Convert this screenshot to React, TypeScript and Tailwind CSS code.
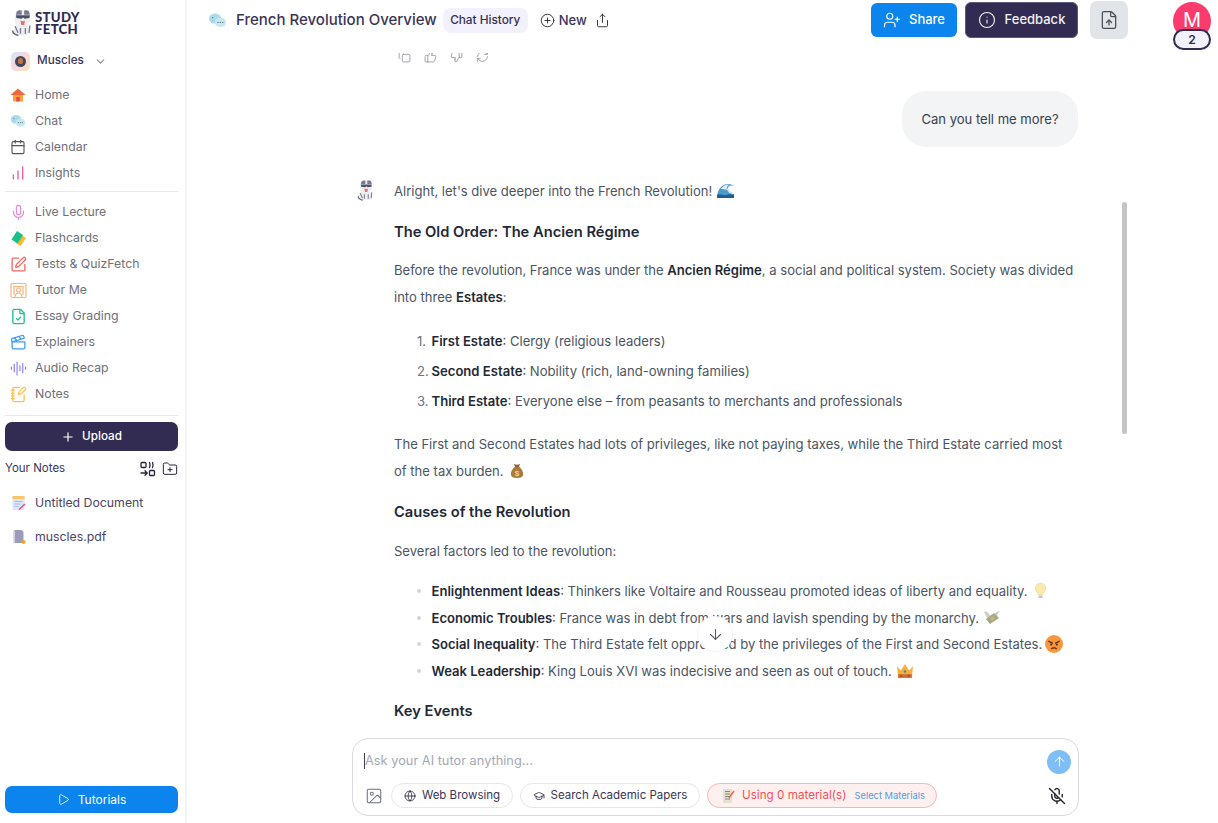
import {
  ArrowDown,
  ArrowUp,
  AudioLines,
  Calendar,
  ChartNoAxesColumnIncreasing,
  ChevronDown,
  CirclePlus,
  Clapperboard,
  Copy,
  FileCheck,
  FileUp,
  FolderPlus,
  Globe,
  GraduationCap,
  Image as ImageIcon,
  Info,
  Mic,
  MicOff,
  NotebookPen,
  Play,
  Plus,
  RefreshCw,
  Share,
  SquarePen,
  ThumbsDown,
  ThumbsUp,
  UserPlus,
} from "lucide-react";

// Small drawn icons
function ChatBubbles({ size = 16 }: { size?: number }) {
  return (
    <svg width={size} height={size} viewBox="0 0 20 20">
      <ellipse cx="7.5" cy="8" rx="6.5" ry="5.5" fill="#a9dbe8" />
      <ellipse cx="13" cy="12" rx="6" ry="5" fill="#c6e8ef" />
      <circle cx="10.5" cy="12" r="0.7" fill="#56707c" />
      <circle cx="13" cy="12" r="0.7" fill="#56707c" />
      <circle cx="15.5" cy="12" r="0.7" fill="#56707c" />
      <circle cx="5" cy="7" r="0.7" fill="#56707c" />
    </svg>
  );
}

function HomeIcon() {
  return (
    <svg width="16" height="16" viewBox="0 0 16 16">
      <path d="M3 7h10v7.5H3z" fill="#f9a23b" />
      <path d="M8 1.5 15.5 8h-15z" fill="#f0683a" />
      <path d="M6.3 10h3.4v4.500H6.3z" fill="#ea3f5b" />
    </svg>
  );
}

function FlashIcon() {
  return (
    <svg width="17" height="17" viewBox="0 0 17 17">
      <path d="M9 3.5 16 8l-5.5 8-4-2.5z" fill="#f7b733" />
      <path d="M7 1 13 5l-5.5 8.5L1.5 9.5z" fill="#16c08a" />
    </svg>
  );
}

function TutorIcon() {
  return (
    <svg width="17" height="17" viewBox="0 0 17 17" fill="none" stroke="#f9b27c" strokeWidth="1.2">
      <rect x="1" y="1.5" width="15" height="14" rx="1.5" />
      <path d="M4 13V4.5h9V13" />
      <circle cx="8.5" cy="8" r="2" />
      <path d="M5 15c.4-2.800 1.800-4 3.500-4s3.100 1.200 3.500 4" />
    </svg>
  );
}

function LayoutSwapIcon() {
  return (
    <svg width="16" height="16" viewBox="0 0 16 16" fill="none" stroke="#27233d" strokeWidth="1.3">
      <rect x="1" y="1.5" width="5" height="5" rx="1" />
      <rect x="9.500" y="9.500" width="5" height="5" rx="1" />
      <path d="M9.500 1.500c.7 1.500.7 3.500 0 5M12.500 1.500c.7 1.500.7 3.500 0 5M1 12h6M5 9.800 7.200 12 5 14.200" strokeLinecap="round" />
    </svg>
  );
}

function DocNote() {
  return (
    <svg width="16" height="16" viewBox="0 0 16 16">
      <path d="M1.500 1h12v14h-12z" fill="#dbe6fb" />
      <path d="M1.500 1h12v3h-12z" fill="#f9c569" />
      <path d="M3.500 6.500h8M3.500 9h6M3.500 11.500h4" stroke="#a9bdea" strokeWidth="1" />
      <path d="M8 14.500 14 9" stroke="#e0527e" strokeWidth="1.500" />
    </svg>
  );
}

function PdfDoc() {
  return (
    <svg width="16" height="16" viewBox="0 0 16 16">
      <path d="M3.500 1h7l2 2v11h-9z" fill="#9c9bbd" />
      <path d="M2 2h1.500v12H2z" fill="#d9d9ea" />
      <circle cx="12.500" cy="13" r="2" fill="#f5a623" />
    </svg>
  );
}

function Mascot({ w, h }: { w: number; h: number }) {
  return (
    <svg width={w} height={h} viewBox="0 0 28 34">
      <path d="M7 3c4-3 11-3 15 0l1 9c0 3-1 5-3 6l3 11c-1 3-4 3-6 3H9c-3 0-6-1-6-3l3-11C4 15 4 7 7 3z" fill="#eceef2" />
      <path d="M7 3c2-2 5-2 6-1v5H6zM16 2c2-1 5 0 6 1l1 4h-7z" fill="#767b90" />
      <path d="M6 7.500h17l-.5 3.500-6 .8-1.800-1.500-1.800 1.500-6.400-.8z" fill="#4a5068" />
      <path d="M11.500 14c1.500 1 4 1 5.500 0l-1 5.500h-3.500z" fill="#ea6d68" />
      <path d="M5 21l3.500 8M23 20l-1 9M11.500 23v7M17.500 23v7" stroke="#767b90" strokeWidth="1.600" />
      <path d="M2 26c0 3 3 6 7 6" stroke="#5a5f75" strokeWidth="1.800" fill="none" />
    </svg>
  );
}

function CourseBadge() {
  return (
    <div className="w-[19px] h-[19px] rounded-[5px] bg-gradient-to-br from-[#cfe9f7] via-[#f9d7dc] to-[#fbe3b4] flex items-center justify-center">
      <div className="w-[11px] h-[11px] rounded-full bg-[#3d4a5e] flex items-center justify-center">
        <div className="w-[5px] h-[6px] rounded-full bg-[#c9743f]" />
      </div>
    </div>
  );
}

// The emoji have no font here, so they are little pictures
function WaveEmoji() {
  return (
    <svg className="inline-block align-[-3px] ml-[4px]" width="19" height="16" viewBox="0 0 19 16">
      <path d="M1 13C2 6 6 1 12 1c3 0 5 1 6 2-3-1-6 0-6 2 0 3 3 5 6 5v5H1z" fill="#4d9ac9" />
      <path d="M5 6c2-3 5-5 8-4-2 1-3 3-2 5-2-1-4-1-6-1z" fill="#e3eef5" />
      <path d="M11 6c.5 3 3 5 7 5v-1c-3 0-6-2-6-5z" fill="#e3eef5" />
      <path d="M1 12c4-2 6 1 9 0s5-1 8 0v3H1z" fill="#1f5f94" />
    </svg>
  );
}

function BagEmoji() {
  return (
    <svg className="inline-block align-[-3px] ml-[5px]" width="16" height="16" viewBox="0 0 16 16">
      <path d="M5.500 4C3 6 1.500 9 2 12c.3 2 2 3 6 3s5.700-1 6-3c.5-3-1-6-3.500-8z" fill="#a97a3b" />
      <path d="M5 1c2 1 4 1 6 0l-1 3H6z" fill="#8c6230" />
      <text x="8" y="12.500" fontSize="8" textAnchor="middle" fill="#f3d47d" fontFamily="Liberation Sans, sans-serif" fontWeight="700">$</text>
    </svg>
  );
}

function BulbEmoji() {
  return (
    <svg className="inline-block align-[-3px] ml-[6px]" width="15" height="17" viewBox="0 0 15 17">
      <path d="M7.500 1a5.500 5.500 0 0 0-3 10c.7.600.8 1.300.8 2h4.400c0-.7.100-1.400.8-2a5.500 5.500 0 0 0-3-10z" fill="#fbe9b0" stroke="#eed9a0" strokeWidth=".6" />
      <path d="M5.500 13.500h4v2.500h-4z" fill="#c4c7cc" />
    </svg>
  );
}

function MoneyEmoji() {
  return (
    <svg className="inline-block align-[-3px] ml-[4px]" width="18" height="16" viewBox="0 0 18 16">
      <path d="M1 2c2-1 4 0 5 2l3 3-5 1C3 6 2 4 1 2zM17 1c-2 2-3 4-4 7l-3-1 2-4c1-1 3-2 5-2z" fill="#cfcfc8" />
      <path d="M3 9 11 3l5 5-9 6z" fill="#a3a889" />
      <circle cx="9.500" cy="8.500" r="1.800" fill="#d8b659" />
    </svg>
  );
}

function AngryEmoji() {
  return (
    <svg className="inline-block align-[-4px] ml-[3px]" width="18" height="18" viewBox="0 0 16 16">
      <circle cx="8" cy="8" r="8" fill="#f8973c" />
      <path d="M3 5.500 7 7.500M13 5.500 9 7.500" stroke="#5b3213" strokeWidth="1.200" />
      <circle cx="5.500" cy="8.500" r="1" fill="#5b3213" />
      <circle cx="10.500" cy="8.500" r="1" fill="#5b3213" />
      <path d="M5.500 12.500c1.500-1.500 3.500-1.500 5 0" stroke="#5b3213" strokeWidth="1.100" fill="none" />
    </svg>
  );
}

function CrownEmoji() {
  return (
    <svg className="inline-block align-[-3px] ml-[4px]" width="18" height="16" viewBox="0 0 17 15">
      <path d="M1 3l3.500 4L8.500 1l4 6L16 3l-1 11H2z" fill="#f4b23c" />
      <path d="M2 10.500h13V14H2z" fill="#c9772c" />
      <circle cx="5" cy="12" r="1.200" fill="#d6394a" />
      <circle cx="12" cy="12" r="1.200" fill="#d6394a" />
      <circle cx="8.500" cy="8" r="1.200" fill="#4a7fd0" />
    </svg>
  );
}

const TOP_NAV = [
  { label: "Home", icon: <HomeIcon /> },
  { label: "Chat", icon: <ChatBubbles /> },
  { label: "Calendar", icon: <Calendar size={16} strokeWidth={1.7} className="text-[#55555f]" /> },
  { label: "Insights", icon: <ChartNoAxesColumnIncreasing size={16} strokeWidth={2} className="text-[#ee5fa0]" /> },
];

const TOOL_NAV = [
  { label: "Live Lecture", icon: <Mic size={17} strokeWidth={1.6} className="text-[#ea88d4]" /> },
  { label: "Flashcards", icon: <FlashIcon /> },
  { label: "Tests & QuizFetch", icon: <SquarePen size={17} strokeWidth={1.9} className="text-[#f56a63]" /> },
  { label: "Tutor Me", icon: <TutorIcon /> },
  { label: "Essay Grading", icon: <FileCheck size={17} strokeWidth={1.9} className="text-[#27c08e]" /> },
  { label: "Explainers", icon: <Clapperboard size={17} strokeWidth={1.8} className="text-[#3d9cf5]" /> },
  { label: "Audio Recap", icon: <AudioLines size={17} strokeWidth={1.5} className="text-[#8a6ef0]" /> },
  { label: "Notes", icon: <NotebookPen size={17} strokeWidth={1.8} className="text-[#fbc14f]" /> },
];

function NavRow({ label, icon }: { label: string; icon: React.ReactNode }) {
  return (
    <div className="h-[26px] pl-[5px] flex items-center text-[12.300px] text-[#6f7078]">
      <span className="w-[25px] flex items-center shrink-0">{icon}</span>
      {label}
    </div>
  );
}

function Sidebar() {
  return (
    <aside className="w-[187px] h-full shrink-0 border-r-2 border-[#f3f3fb] flex flex-col pl-[5px] pr-[7px]">
      <div className="pt-[9px] pl-[6px] h-[47px] flex items-start gap-[1px]">
        <Mascot w={23} h={28} />
        <div className="text-[#2f2a52] font-black text-[13.200px] leading-[11.500px] tracking-[0.3px] mt-[3px] font-['Lato',sans-serif]">
          STUDY
          <br />
          FETCH
        </div>
      </div>
      <div className="h-[28px] pl-[6px] flex items-center text-[11.700px] font-medium text-[#3a3558]">
        <CourseBadge />
        <span className="ml-[7px]">Muscles</span>
        <ChevronDown size={13} className="ml-[10px] text-[#8a8a96]" />
      </div>
      <div className="mt-[7px]">
        {TOP_NAV.map((n) => (
          <NavRow key={n.label} {...n} />
        ))}
      </div>
      <div className="border-t border-[#e5e7eb] mt-[5px] mb-[7px]" />
      {TOOL_NAV.map((n) => (
        <NavRow key={n.label} {...n} />
      ))}
      <div className="border-t border-[#e5e7eb] mt-[8px] mb-[7px]" />
      <div className="-mt-[1px] h-[29px] rounded-[7px] bg-[#322c52] text-white text-[11.700px] flex items-center justify-center gap-[7px] font-medium">
        <Plus size={14} />
        Upload
      </div>
      <div className="mt-[7px] h-[21px] flex items-center justify-between text-[11.500px] text-[#3a3558]">
        Your Notes
        <span className="flex items-center gap-[6px]">
          <LayoutSwapIcon />
          <FolderPlus size={16} strokeWidth={1.5} className="text-[#27233d]" />
        </span>
      </div>
      <div className="mt-[7px] h-[34px] pl-[6px] flex items-center gap-[8px] text-[12.300px] text-[#4a4668]">
        <DocNote />
        Untitled Document
      </div>
      <div className="h-[34px] pl-[6px] flex items-center gap-[8px] text-[12.300px] text-[#4a4668]">
        <PdfDoc />
        muscles.pdf
      </div>
      <div className="mt-auto mb-[10px] h-[27px] rounded-[7px] bg-[#0b84ee] text-white text-[12px] flex items-center justify-center gap-[8px]">
        <Play size={13} strokeWidth={1.6} />
        Tutorials
      </div>
    </aside>
  );
}

function Header() {
  return (
    <header className="h-[53px] shrink-0 flex items-start pl-[21px] pr-[7px]">
      <div className="h-[41px] flex items-center">
        <ChatBubbles size={19} />
        <span className="ml-[9px] text-[15px] font-medium text-[#3a3558]">French Revolution Overview</span>
        <span className="ml-[6px] h-[25px] w-[85px] rounded-[8px] bg-[#f3f1fd] flex items-center justify-center text-[11.800px] font-medium text-[#35304f]">
          Chat History
        </span>
        <CirclePlus size={15} strokeWidth={1.5} className="ml-[12px] text-[#2c2c36]" />
        <span className="ml-[4px] text-[13px] font-medium text-[#3a3558]">New</span>
        <Share size={15} strokeWidth={1.5} className="ml-[8px] text-[#2c2c36]" />
      </div>
      <div className="ml-auto flex items-start">
        <div className="mt-[3px] w-[86px] h-[34px] rounded-[6px] bg-[#0b84ee] text-white text-[13px] font-medium flex items-center justify-center gap-[8px]">
          <UserPlus size={18} strokeWidth={1.6} />
          Share
        </div>
        <div className="ml-[8px] mt-[2px] w-[113px] h-[36px] rounded-[6px] bg-[#322c52] border border-[#5c5878] text-[#f1f1f5] text-[13px] font-medium flex items-center justify-center gap-[9px]">
          <Info size={18} strokeWidth={1.5} />
          Feedback
        </div>
        <div className="ml-[12px] mt-[1px] w-[38px] h-[38px] rounded-[7px] bg-[#e1e4e8] flex items-center justify-center">
          <FileUp size={20} strokeWidth={1.5} className="text-[#4b4d55]" />
        </div>
        <div className="ml-[45px] mt-[2px] w-[38px] h-[48px] relative">
          <div className="w-[38px] h-[38px] rounded-full bg-[#fb3a6e] text-white text-[20px] flex items-center justify-center pb-[3px]">
            M
          </div>
          <div className="absolute left-0 top-[27px] w-[38px] h-[21px] rounded-full border-2 border-[#322c52] bg-[#f3f1fd] flex items-center justify-center text-[12px] font-semibold text-[#322c52]">
            2
          </div>
        </div>
      </div>
    </header>
  );
}

function Strong({ children }: { children: React.ReactNode }) {
  return <strong className="font-semibold text-[#1f2937]">{children}</strong>;
}

function Heading({ children, className }: { children: React.ReactNode; className: string }) {
  return <h3 className={`text-[14.700px] leading-[24px] font-semibold text-[#1f2937] ${className}`}>{children}</h3>;
}

function Bullet({ children }: { children: React.ReactNode }) {
  return (
    <li className="h-[26.500px] leading-[26.500px] flex whitespace-nowrap">
      <span className="w-[37.500px] pl-[23px] shrink-0 flex items-center">
        <span className="w-[4px] h-[4px] rounded-full bg-[#d1d5db]" />
      </span>
      <span>{children}</span>
    </li>
  );
}

function NumberItem({ n, children }: { n: number; children: React.ReactNode }) {
  return (
    <li className="h-[30px] leading-[30px] flex text-[13.100px]">
      <span className="w-[37.500px] pl-[23px] text-[#6b7280]">{n}.</span>
      <span>{children}</span>
    </li>
  );
}

function Messages() {
  return (
    <div className="flex-1 min-h-0 relative overflow-hidden">
      <div className="w-[726px] ml-[165px] text-[13.050px] text-[#4b5563]">
        <div className="-mt-[4px] h-[14px] pl-[46px] flex items-center gap-[13px] text-[#8a8a92]">
          <Copy size={13} strokeWidth={1.4} />
          <ThumbsUp size={13} strokeWidth={1.4} />
          <ThumbsDown size={13} strokeWidth={1.4} />
          <RefreshCw size={13} strokeWidth={1.4} />
        </div>
        <div className="mt-[28px] flex justify-end">
          <div className="w-[176px] h-[56px] rounded-[24px] bg-[#f3f4f6] flex items-center justify-center pt-[1px] text-[#374151]">
            Can you tell me more?
          </div>
        </div>
        <div className="mt-[31px] flex">
          <div className="w-[42px] shrink-0 pl-[5px]">
            <Mascot w={18} h={25} />
          </div>
          <div className="flex-1">
            <p className="leading-[27px]">
              Alright, let's dive deeper into the French Revolution!
              <WaveEmoji />
            </p>
            <Heading className="mt-[15px]">The Old Order: The Ancien Régime</Heading>
            <p className="mt-[13px] leading-[27px] w-[682px]">
              Before the revolution, France was under the <Strong>Ancien Régime</Strong>, a social and political system. Society was divided into three <Strong>Estates</Strong>:
            </p>
            <ol className="mt-[15px]">
              <NumberItem n={1}><Strong>First Estate</Strong>: Clergy (religious leaders)</NumberItem>
              <NumberItem n={2}><Strong>Second Estate</Strong>: Nobility (rich, land-owning families)</NumberItem>
              <NumberItem n={3}><Strong>Third Estate</Strong>: Everyone else – from peasants to merchants and professionals</NumberItem>
            </ol>
            <p className="mt-[15px] leading-[27px] w-[682px]">
              The First and Second Estates had lots of privileges, like not paying taxes, while the Third Estate carried most of the tax burden.
              <BagEmoji />
            </p>
            <Heading className="mt-[15px]">Causes of the Revolution</Heading>
            <p className="mt-[14px] leading-[27px]">Several factors led to the revolution:</p>
            <ul className="mt-[13px]">
              <Bullet><Strong>Enlightenment Ideas</Strong>: Thinkers like Voltaire and Rousseau promoted ideas of liberty and equality.<BulbEmoji /></Bullet>
              <Bullet><Strong>Economic Troubles</Strong>: France was in debt from wars and lavish spending by the monarchy.<MoneyEmoji /></Bullet>
              <Bullet><Strong>Social Inequality</Strong>: The Third Estate felt oppressed by the privileges of the First and Second Estates.<AngryEmoji /></Bullet>
              <Bullet><Strong>Weak Leadership</Strong>: King Louis XVI was indecisive and seen as out of touch.<CrownEmoji /></Bullet>
            </ul>
            <Heading className="mt-[15px]">Key Events</Heading>
          </div>
        </div>
      </div>
      {/* scroll thumb */}
      <div className="absolute left-[935px] top-[149px] w-[5px] h-[232px] rounded-full bg-[#c4c4c8]" />
      {/* jump to bottom */}
      <div className="absolute left-[510px] top-[563px] w-[36px] h-[36px] rounded-full bg-white border border-[#f3f3fb] flex items-center justify-center text-[#55565e]">
        <ArrowDown size={17} strokeWidth={1.5} />
      </div>
    </div>
  );
}

function Composer() {
  return (
    <div className="shrink-0 pb-[7px] ml-[165px] w-[727px]">
      <div className="h-[78px] rounded-[16px] border border-[#d8dade] bg-white px-[11px] flex flex-col">
        <div className="h-[43px] flex items-center justify-between">
          <span className="border-l border-[#374151] leading-[16px] text-[12.800px] text-[#a3a9b3]">Ask your AI tutor anything...</span>
          <span className="-mr-[4px] mt-[2px] w-[24px] h-[24px] rounded-full bg-[#7fbdf6] flex items-center justify-center text-white">
            <ArrowUp size={15} strokeWidth={1.6} />
          </span>
        </div>
        <div className="mt-[1px] pl-[1px] flex items-center">
          <ImageIcon size={18} strokeWidth={1.4} className="text-[#6b7280]" />
          <span className="ml-[8px] h-[25px] w-[122px] rounded-full border border-[#e5e7eb] flex items-center justify-center gap-[6px] text-[11.500px] text-[#3a3558]">
            <Globe size={12} strokeWidth={1.6} className="text-[#27233d]" />
            Web Browsing
          </span>
          <span className="ml-[7px] h-[25px] w-[180px] rounded-full border border-[#e5e7eb] flex items-center justify-center gap-[6px] text-[11.500px] text-[#3a3558]">
            <GraduationCap size={12} strokeWidth={1.6} className="text-[#27233d]" />
            Search Academic Papers
          </span>
          <span className="ml-[7px] h-[25px] w-[230px] rounded-full border border-[#fbb4b4] bg-[#fff0f0] flex items-center pl-[13px] text-[11.700px] text-[#f4505a]">
            <svg width="15" height="16" viewBox="0 0 15 16">
              <path d="M2 1h9v14H2z" fill="#e4e0d4" />
              <path d="M4 3.500h5M4 6h5M4 8.500h5M4 11h5" stroke="#8b8578" strokeWidth="1" />
              <path d="M8 10 13 3" stroke="#e8674b" strokeWidth="1.500" />
            </svg>
            <span className="ml-[6px]">Using 0 material(s)</span>
            <span className="ml-[8px] text-[9.300px] text-[#4f9be8]">Select Materials</span>
          </span>
          <MicOff size={18} strokeWidth={1.9} className="ml-auto mr-[1px] text-[#27272f]" />
        </div>
      </div>
    </div>
  );
}

export default function App() {
  return (
    <div className="w-[1218px] h-[823px] overflow-hidden bg-white flex font-['Inter',sans-serif]">
      <Sidebar />
      <main className="flex-1 min-w-0 h-full flex flex-col">
        <Header />
        <Messages />
        <Composer />
      </main>
    </div>
  );
}
